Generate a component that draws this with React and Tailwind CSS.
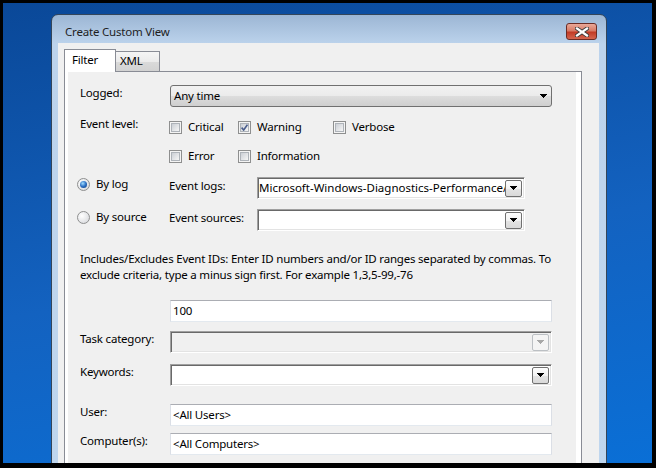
import React from 'react';

// Small black combo arrow, drawn pixel by pixel (rows of 7, 5, 3, 1)
const Arrow = ({ color = '#000' }) => (
  <svg width="7" height="4" viewBox="0 0 7 4" fill={color} shapeRendering="crispEdges">
    <path d="M0 0h7v1h-1v1h-1v1h-1v1h-1v-1h-1v-1h-1v-1h-1z" />
  </svg>
);

const DropButton = ({ disabled }) => (
  <div
    className={`w-[17px] h-[17px] shrink-0 rounded-[2px] border flex items-center justify-center ${
      disabled
        ? 'border-[#bcc0c4] bg-[#f4f4f4]'
        : 'border-[#707070] bg-[linear-gradient(180deg,#fdfdfd_0%,#f2f2f2_50%,#e4e4e4_51%,#d9d9d9_100%)]'
    }`}
  >
    <Arrow color={disabled ? '#a8a8a8' : '#000'} />
  </div>
);

// Sunken combo box with a little drop button on the right
const SunkenCombo = ({ width, value, disabled }) => (
  <div
    className={`${width} h-[22px] flex items-center border border-t-[#a0a0a0] border-l-[#a0a0a0] border-r-white border-b-white shadow-[inset_1px_1px_0_#696969,inset_-1px_-1px_0_#e3e3e3] pl-[1px] pr-[2px] ${
      disabled ? 'bg-[#f0f0f0]' : 'bg-white'
    }`}
  >
    <div className="flex-1 overflow-hidden whitespace-nowrap leading-[16px] tracking-normal">{value}</div>
    <DropButton disabled={disabled} />
  </div>
);

const TextBox = ({ value }) => (
  <div className="w-[382px] h-[22px] flex items-center bg-white border border-t-[#abadb3] border-x-[#dbdfe6] border-b-[#e3e9ef] pl-[2px] leading-[16px] whitespace-nowrap">
    {value}
  </div>
);

const CheckBox = ({ checked }) => (
  <div className="w-[13px] h-[13px] shrink-0 border border-[#8e8f8f] bg-[#f4f4f4] p-[1px]">
    <div className="w-full h-full border border-[#aeb3b9] bg-[linear-gradient(135deg,#cbcfd5,#f6f6f6)] flex items-center justify-center">
      {checked && (
        <svg width="7" height="7" viewBox="0 0 7 7">
          <path d="M0.6 3.6L2.7 6L6.4 0.6" fill="none" stroke="#4a5d8c" strokeWidth="1.6" />
        </svg>
      )}
    </div>
  </div>
);

const Check = ({ label, checked, width = '' }) => (
  <div className={`${width} flex items-center`}>
    <CheckBox checked={checked} />
    <span className="ml-[6px] leading-[16px]">{label}</span>
  </div>
);

const Radio = ({ checked }) => (
  <div className="w-[13px] h-[13px] shrink-0 rounded-full border border-[#8e8f8f] bg-[radial-gradient(circle_at_35%_35%,#ffffff,#d2d4d8)] flex items-center justify-center">
    {checked && (
      <div className="w-[7px] h-[7px] rounded-full bg-[radial-gradient(circle_at_40%_35%,#9fdcff_0%,#2b6fc4_50%,#0e3a78_100%)]" />
    )}
  </div>
);

const CloseButton = () => (
  <div className="mt-[8px] mr-[9px] w-[31px] h-[17px] rounded-[3px] border border-[#6b2c25] bg-[linear-gradient(180deg,#eaa898_0%,#d77a66_45%,#c23b26_55%,#d4654f_100%)] flex items-center justify-center">
    <svg width="14" height="10" viewBox="0 0 14 10">
      <path d="M2 1.5L12 8.5M12 1.5L2 8.5" stroke="#3b3b3b" strokeWidth="4" strokeLinecap="square" />
      <path d="M2 1.5L12 8.5M12 1.5L2 8.5" stroke="#ffffff" strokeWidth="2.2" strokeLinecap="square" />
    </svg>
  </div>
);

export default function App() {
  return (
    <div className="w-[656px] h-[468px] bg-black pt-[3px] pl-[3px] pr-[4px] pb-[5px] font-['Noto_Sans',sans-serif] text-[11.5px] tracking-[-0.2px] text-black">
      <div className="w-full h-full overflow-hidden bg-[linear-gradient(170deg,#0a4898_0%,#1362c0_55%,#0a6fd6_100%)] pl-[48px] pt-[11px]">
        {/* Dialog window */}
        <div className="w-[556px] rounded-t-[7px] border border-[#34465a] bg-[linear-gradient(180deg,#9cb6d4_0px,#bcd3ec_29px,#bfd6ee_100%)]">
          {/* Title bar */}
          <div className="h-[28px] flex items-start justify-between">
            <div className="pl-[13px] pt-[9px] leading-[16px] text-[#1e1e1e]">Create Custom View</div>
            <CloseButton />
          </div>

          <div className="pl-[6px] pr-[7px]">
            <div className="h-[440px] bg-[#f0f0f0] pt-[6px] pl-[6px]">
              {/* Tabs */}
              <div className="flex items-end">
                <div className="relative z-10 -mb-px w-[52px] h-[23px] border border-b-0 border-[#898c95] bg-white pl-[7px] pt-[2px] leading-[16px]">
                  Filter
                </div>
                <div className="w-[44px] h-[20px] border border-l-0 border-b-0 border-[#898c95] bg-[linear-gradient(180deg,#f5f5f5_0%,#ebebeb_50%,#dadada_51%,#d2d2d2_100%)] pl-[4px] pt-[1px] leading-[16px]">
                  XML
                </div>
              </div>

              {/* Tab panel */}
              <div className="w-[518px] h-[420px] border border-[#898c95] bg-white pl-[3px] pr-[5px]">
                <div className="h-full bg-[#f0f0f0] pl-[12px]">
                  {/* Logged */}
                  <div className="flex items-start pt-[13px]">
                    <div className="w-[90px] leading-[16px]">Logged:</div>
                    <div className="w-[382px] h-[22px] rounded-[3px] border border-[#707070] bg-[linear-gradient(180deg,#f2f2f2_0%,#ebebeb_50%,#dddddd_51%,#cfcfcf_100%)] flex items-center justify-between pl-[3px] pr-[4px]">
                      <span className="leading-[16px]">Any time</span>
                      <Arrow />
                    </div>
                  </div>

                  {/* Event level */}
                  <div className="flex items-start mt-[9px]">
                    <div className="w-[89px] leading-[16px]">Event level:</div>
                    <div className="h-[22px] flex items-center">
                      <Check label="Critical" width="w-[69px]" />
                      <Check label="Warning" checked width="w-[95px]" />
                      <Check label="Verbose" />
                    </div>
                  </div>
                  <div className="flex items-center h-[22px] mt-[7px] pl-[89px]">
                    <Check label="Error" width="w-[69px]" />
                    <Check label="Information" />
                  </div>

                  {/* By log */}
                  <div className="flex items-start mt-[10px] -ml-[3px]">
                    <div className="w-[92px] h-[14px] flex items-center">
                      <Radio checked />
                      <span className="ml-[6px] leading-[16px] whitespace-nowrap">By log</span>
                    </div>
                    <div className="w-[88px] pt-[1px] leading-[16px]">Event logs:</div>
                    <SunkenCombo width="w-[268px]" value="Microsoft-Windows-Diagnostics-Performance/Operational" />
                  </div>

                  {/* By source */}
                  <div className="flex items-start mt-[10px] -ml-[3px]">
                    <div className="w-[92px] h-[14px] mt-[1px] flex items-center">
                      <Radio />
                      <span className="ml-[6px] leading-[16px] whitespace-nowrap">By source</span>
                    </div>
                    <div className="w-[88px] pt-[1px] leading-[16px] whitespace-nowrap">Event sources:</div>
                    <SunkenCombo width="w-[268px]" value="" />
                  </div>

                  {/* Event IDs hint */}
                  <div className="mt-[20px] leading-[16px] whitespace-nowrap">
                    Includes/Excludes Event IDs: Enter ID numbers and/or ID ranges separated by commas. To
                    <br />
                    exclude criteria, type a minus sign first. For example 1,3,5-99,-76
                  </div>

                  <div className="mt-[17px] pl-[90px]">
                    <TextBox value="100" />
                  </div>

                  <div className="flex items-start mt-[9px]">
                    <div className="w-[90px] leading-[16px] whitespace-nowrap">Task category:</div>
                    <SunkenCombo width="w-[382px]" value="" disabled />
                  </div>

                  <div className="flex items-start mt-[11px]">
                    <div className="w-[90px] leading-[16px]">Keywords:</div>
                    <SunkenCombo width="w-[382px]" value="" />
                  </div>

                  <div className="flex items-start mt-[18px]">
                    <div className="w-[90px] leading-[16px]">User:</div>
                    <TextBox value={'<All Users>'} />
                  </div>

                  <div className="flex items-start mt-[7px]">
                    <div className="w-[90px] leading-[16px]">Computer(s):</div>
                    <TextBox value={'<All Computers>'} />
                  </div>
                </div>
              </div>
            </div>
          </div>
        </div>
      </div>
    </div>
  );
}
